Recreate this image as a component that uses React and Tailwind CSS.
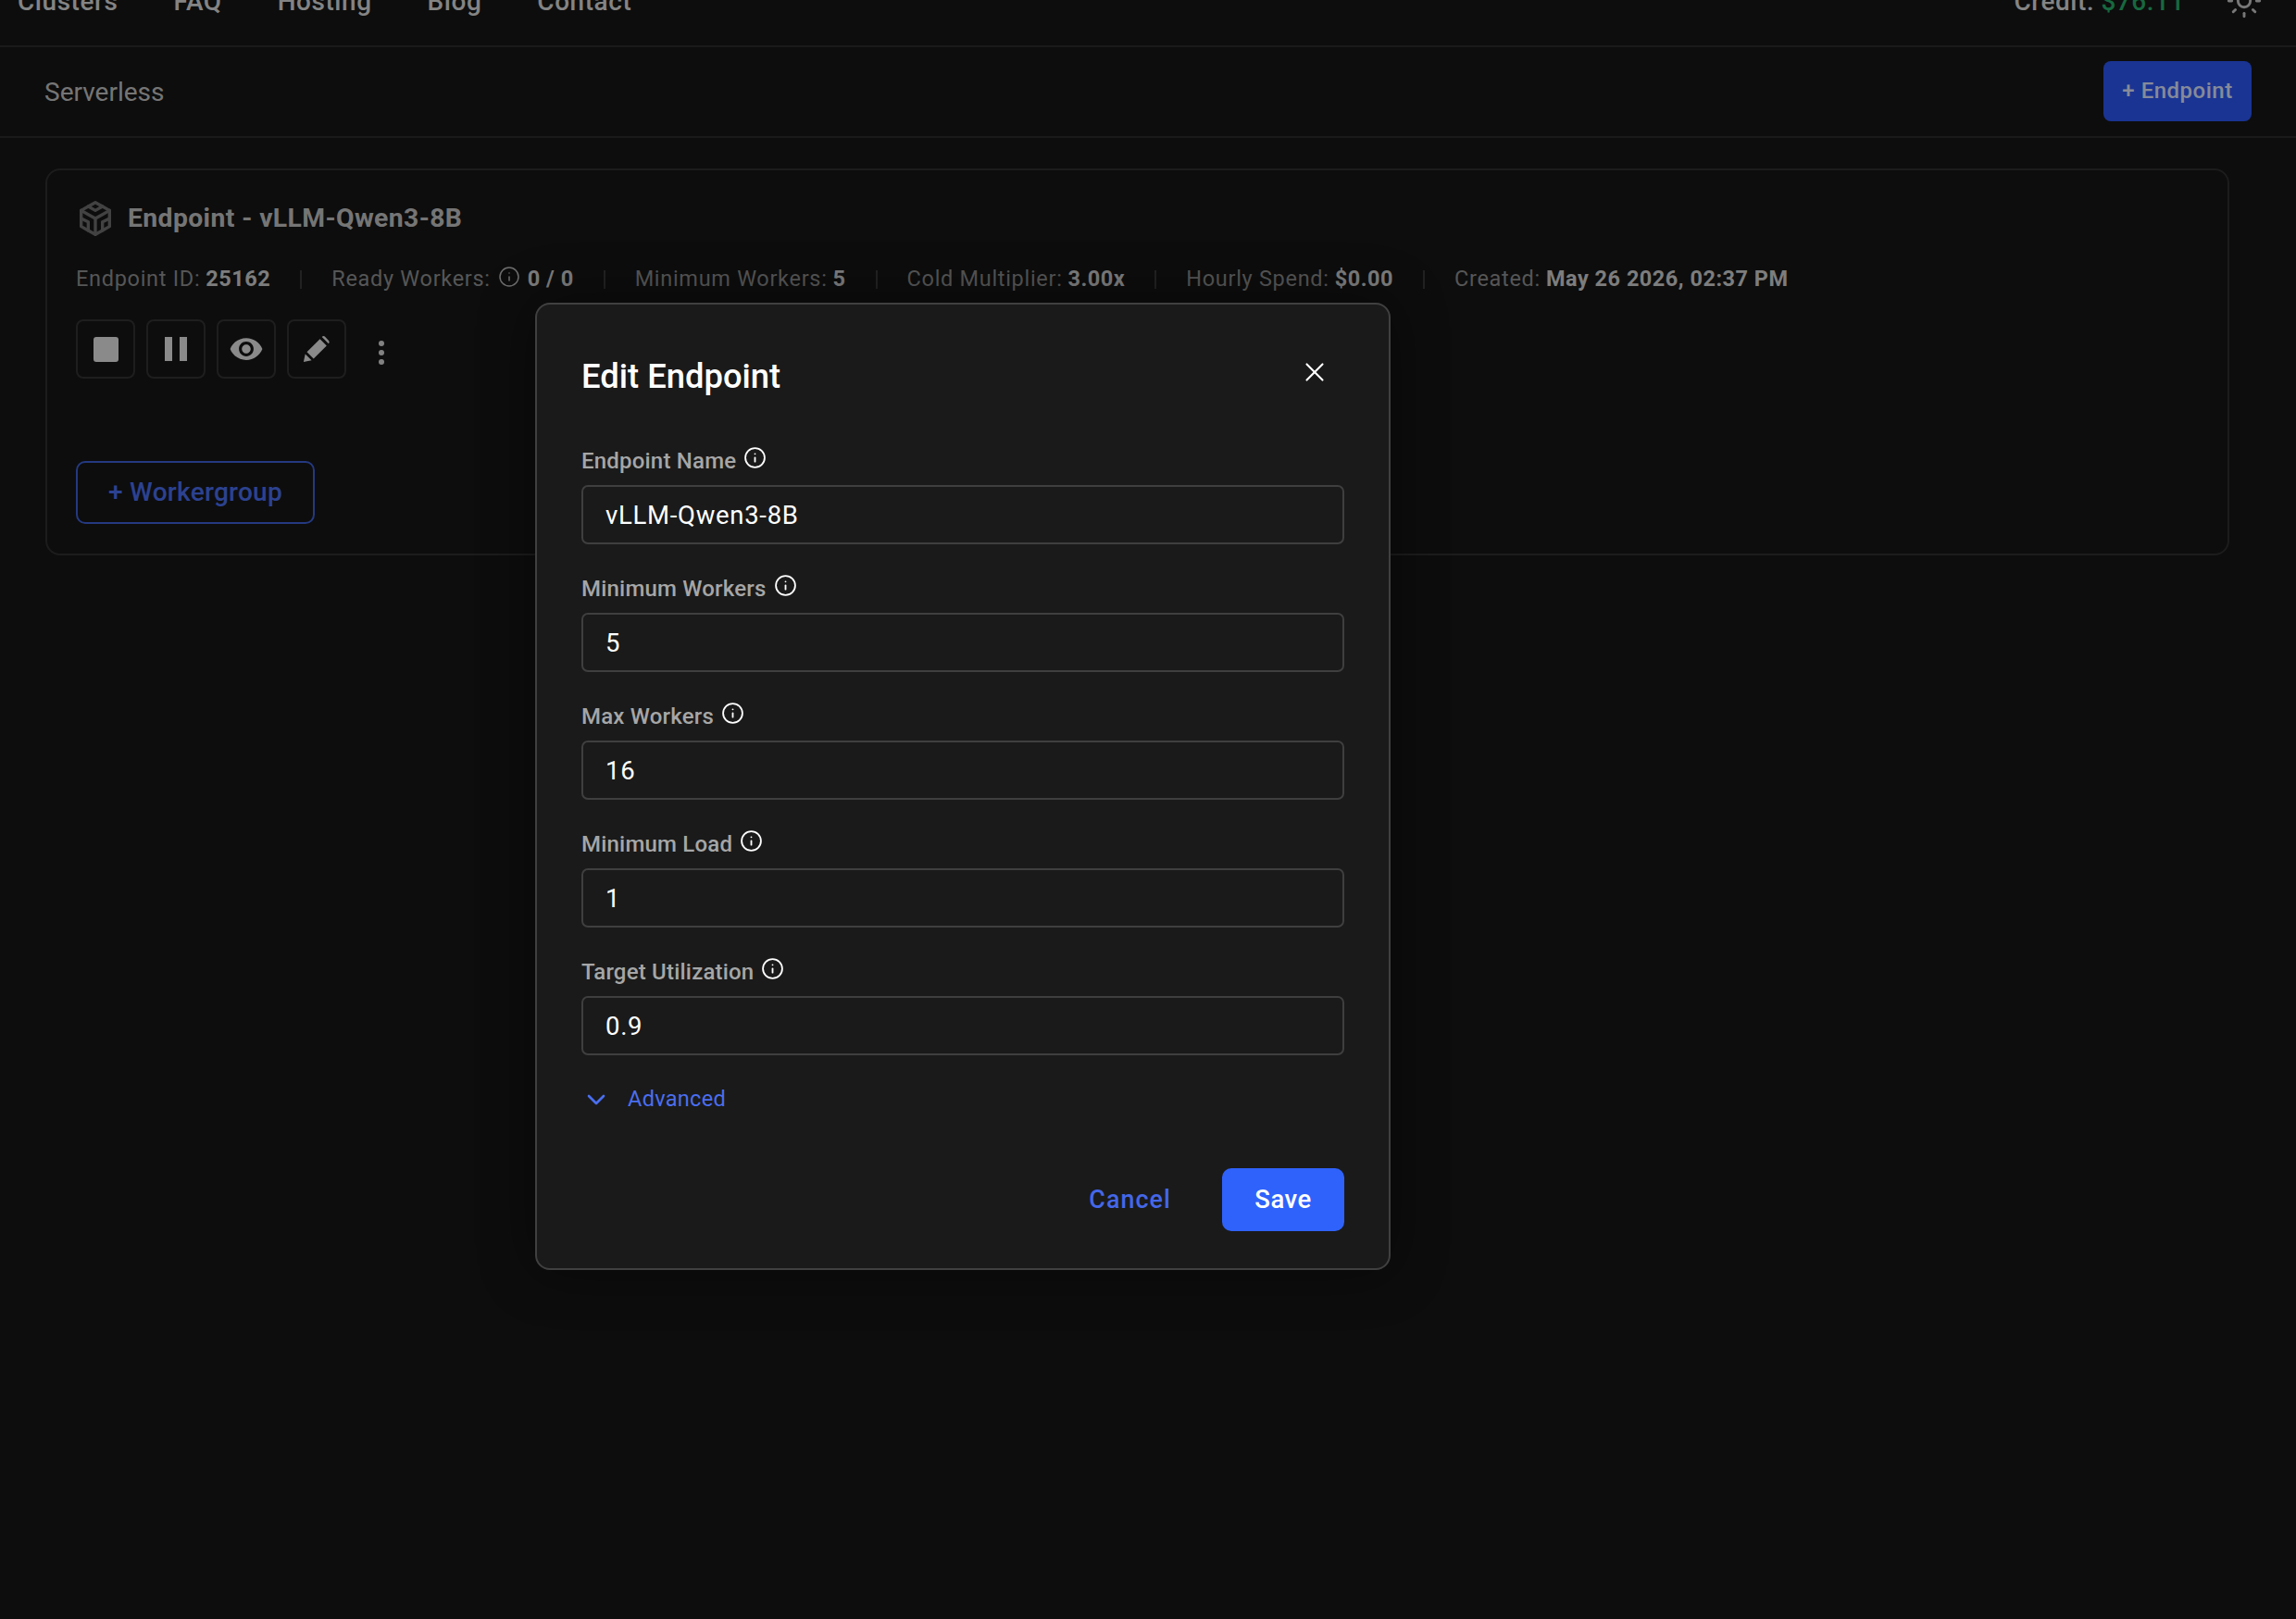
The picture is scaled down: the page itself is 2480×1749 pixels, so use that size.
import React from "react";
import { Info, Sun, X, ChevronDown } from "lucide-react";
import { TbBrandCodesandbox } from "react-icons/tb";

function Sep() {
  return <span className="mx-[32px] h-[20px] w-[2px] bg-[#3a3a3a]" />;
}

function Stat({ label, children }) {
  return (
    <span className="flex items-center gap-[6px]">
      <span className="font-normal tracking-[0.7px] text-[#8f8f8f]">{label}</span>
      <span className="font-bold tracking-[0.5px] text-[#d0d0d0]">{children}</span>
    </span>
  );
}

function IconBtn({ children }) {
  return (
    <button className="flex h-[64px] w-[64px] items-center justify-center rounded-[8px] border-2 border-[#333333] text-[#e6e6e6]">
      {children}
    </button>
  );
}

function Field({ label, value }) {
  return (
    <div className="flex flex-col">
      <div className="mb-[12px] flex h-[28px] items-center gap-[8px]">
        <span className="text-[24px] font-medium tracking-[0.2px] text-[#a6a6a6]">{label}</span>
        <Info size={25} strokeWidth={1.75} className="-mt-[8px] text-white" />
      </div>
      <input
        readOnly
        value={value}
        className="h-[64px] w-full rounded-[7px] border-2 border-[#3f3f3f] bg-transparent px-[24px] text-[27.5px] tracking-[0.7px] text-white outline-none"
      />
    </div>
  );
}

export default function App() {
  return (
    <div className="relative h-[1749px] w-[2480px] overflow-hidden bg-[#161616] font-['Roboto',sans-serif]">
      <header className="h-[51px] overflow-hidden border-b-2 border-[#2c2c2c]">
        <div className="-mt-[18px] flex h-[40px] items-center justify-between pl-[19px] pr-[36px] text-[27.9px] font-medium text-[#dddddd]">
          <nav className="flex gap-[60px] tracking-[0.6px]">
            <span>Clusters</span>
            <span>FAQ</span>
            <span>Hosting</span>
            <span>Blog</span>
            <span>Contact</span>
          </nav>
          <div className="flex items-center gap-[44px]">
            <span className="tracking-[0.6px]">
              Credit: <span className="text-[#27b06a]">$76.11</span>
            </span>
            <Sun size={40} strokeWidth={1.75} className="-mt-[2px] text-[#c8c8c8]" />
          </div>
        </div>
      </header>

      <div className="flex h-[98px] items-center justify-between border-b-2 border-[#2c2c2c] pl-[48px] pr-[48px]">
        <span className="pt-[2px] text-[28px] text-[#c4c4c4]">Serverless</span>
        <button className="mb-[2px] flex h-[65px] w-[160px] items-center justify-center rounded-[8px] bg-[#2c57f5] text-[24px] font-medium tracking-[0.5px] text-[#dfe6ff]">
          + Endpoint
        </button>
      </div>

      <section className="ml-[49px] mr-[72px] mt-[33px] h-[418px] rounded-[16px] border-2 border-[#303030] pl-[31px] pt-[32px]">
        <div className="flex h-[40px] items-center gap-[12px]">
          <TbBrandCodesandbox size={46} strokeWidth={1.75} className="-ml-[2px] text-[#6f6f6f]" />
          <h2 className="text-[28.3px] font-bold tracking-[0.4px] text-[#c4c4c4]">Endpoint - vLLM-Qwen3-8B</h2>
        </div>
        <div className="mt-[29px] flex h-[34px] items-center whitespace-nowrap text-[23.5px]">
          <Stat label="Endpoint ID:">25162</Stat>
          <Sep />
          <span className="flex items-center gap-[8px]">
            <span className="tracking-[0.7px] text-[#8f8f8f]">Ready Workers:</span>
            <Info size={24} strokeWidth={1.5} className="-mt-[6px] text-[#b8b8b8]" />
            <span className="font-bold tracking-[0.5px] text-[#d0d0d0]">0 / 0</span>
          </span>
          <Sep />
          <Stat label="Minimum Workers:">5</Stat>
          <Sep />
          <Stat label="Cold Multiplier:">3.00x</Stat>
          <Sep />
          <Stat label="Hourly Spend:">$0.00</Stat>
          <Sep />
          <Stat label="Created:">May 26 2026, 02:37 PM</Stat>
        </div>
        <div className="mt-[26px] flex items-center gap-[12px]">
          <IconBtn>
            <span className="h-[27px] w-[27px] rounded-[3px] bg-[#e6e6e6]" />
          </IconBtn>
          <IconBtn>
            <span className="flex gap-[8px]">
              <span className="h-[26px] w-[8px] bg-[#e6e6e6]" />
              <span className="h-[26px] w-[8px] bg-[#e6e6e6]" />
            </span>
          </IconBtn>
          <IconBtn>
            <svg width="38" height="38" viewBox="0 0 24 24" fill="currentColor">
              <path d="M12 4.5C7 4.5 2.73 7.61 1 12c1.73 4.39 6 7.5 11 7.5s9.27-3.11 11-7.5c-1.73-4.39-6-7.5-11-7.5zM12 17c-2.76 0-5-2.24-5-5s2.24-5 5-5 5 2.24 5 5-2.24 5-5 5zm0-8c-1.66 0-3 1.34-3 3s1.34 3 3 3 3-1.34 3-3-1.34-3-3-3z" />
            </svg>
          </IconBtn>
          <IconBtn>
            <svg width="36" height="36" viewBox="0 0 24 24" fill="currentColor">
              <path d="M15.8 3.4 20.6 8.2a1.6 1.6 0 0 0 .1-2.2L18.2 3.4a1.6 1.6 0 0 0-2.4 0zM14.4 4.8 5 14.2 9.8 19 19.2 9.6zM3.8 15.6 2.6 21.4 8.4 20.2z" />
            </svg>
          </IconBtn>
          <button className="ml-[23px] mt-[8px] flex flex-col gap-[4px] text-[#e6e6e6]">
            <span className="h-[6px] w-[6px] rounded-full bg-[#d8d8d8]" />
            <span className="h-[6px] w-[6px] rounded-full bg-[#d8d8d8]" />
            <span className="h-[6px] w-[6px] rounded-full bg-[#d8d8d8]" />
          </button>
        </div>
        <button className="mt-[89px] flex h-[68px] w-[258px] items-center justify-center rounded-[10px] border-2 border-[#3d5fd6] text-[28px] font-medium tracking-[0.3px] text-[#4a6ef0]">
          + Workergroup
        </button>
      </section>

      <div className="absolute inset-0 bg-black/40" />

      <div
        role="dialog"
        className="absolute left-[578px] top-[327px] w-[924px] rounded-[16px] border-2 border-[#404040] bg-[#1a1a1a] pb-[40px] pl-[48px] pr-[48px] pt-[58px] shadow-[0_0_60px_rgba(0,0,0,0.45)]"
      >
        <div className="flex h-[40px] items-start justify-between">
          <h2 className="text-[36.4px] font-medium leading-[40px] text-white">Edit Endpoint</h2>
          <X size={34} strokeWidth={1.5} className="-mt-[2px] mr-[15px] text-white" />
        </div>
        <div className="mt-[57px] flex flex-col gap-[34px]">
          <Field label="Endpoint Name" value="vLLM-Qwen3-8B" />
          <Field label="Minimum Workers" value="5" />
          <Field label="Max Workers" value="16" />
          <Field label="Minimum Load" value="1" />
          <Field label="Target Utilization" value="0.9" />
        </div>
        <button className="mt-[32px] flex h-[32px] items-center gap-[18px] text-[23.5px] tracking-[0.3px] text-[#4a6ef0]">
          <ChevronDown size={32} strokeWidth={2} />
          Advanced
        </button>
        <div className="mt-[58px] flex items-center justify-end gap-[55px]">
          <button className="pt-[1px] text-[26.8px] font-medium tracking-[1.1px] text-[#4467e8]">Cancel</button>
          <button className="h-[68px] w-[132px] rounded-[10px] bg-[#2f62fb] text-[27.5px] font-medium tracking-[0.5px] text-white">
            Save
          </button>
        </div>
      </div>
    </div>
  );
}
